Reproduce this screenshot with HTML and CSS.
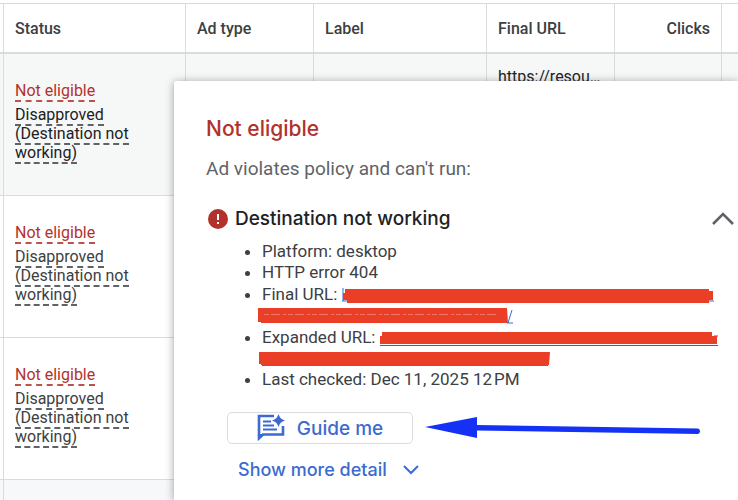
FILE: index.html
```html
<!DOCTYPE html>
<html lang="en">
<head>
    <meta charset="UTF-8">
    <meta name="viewport" content="width=device-width, initial-scale=1.0">
    <title>Ads</title>
    <link rel="stylesheet" href="styles.css">
</head>
<body>

    <!-- Ads table -->
    <table class="ads-table">
        <colgroup>
            <col class="col-edge">
            <col class="col-status">
            <col class="col-type">
            <col class="col-label">
            <col class="col-url">
            <col class="col-clicks">
            <col>
        </colgroup>
        <thead>
            <tr>
                <th></th>
                <th>Status</th>
                <th>Ad type</th>
                <th>Label</th>
                <th>Final URL</th>
                <th class="number">Clicks</th>
                <th></th>
            </tr>
        </thead>
        <tbody>
            <tr class="active">
                <td></td>
                <td>
                    <div class="status"><span class="status-error">Not eligible</span></div>
                    <div class="reason"><span>Disapproved (Destination not working)</span></div>
                </td>
                <td></td>
                <td></td>
                <td class="url">https://resou…</td>
                <td></td>
                <td></td>
            </tr>
            <tr>
                <td></td>
                <td>
                    <div class="status"><span class="status-error">Not eligible</span></div>
                    <div class="reason"><span>Disapproved (Destination not working)</span></div>
                </td>
                <td></td>
                <td></td>
                <td></td>
                <td></td>
                <td></td>
            </tr>
            <tr>
                <td></td>
                <td>
                    <div class="status"><span class="status-error">Not eligible</span></div>
                    <div class="reason"><span>Disapproved (Destination not working)</span></div>
                </td>
                <td></td>
                <td></td>
                <td></td>
                <td></td>
                <td></td>
            </tr>
        </tbody>
        <tfoot>
            <tr>
                <td></td>
                <td></td>
                <td></td>
                <td></td>
                <td></td>
                <td></td>
                <td></td>
            </tr>
        </tfoot>
    </table>

    <!-- Policy details popup -->
    <section class="popup">
        <h2>Not eligible</h2>
        <p>Ad violates policy and can't run:</p>

        <div class="issue-header">
            <svg class="error-icon" width="20" height="20" viewBox="0 0 20 20" aria-hidden="true">
                <circle cx="10" cy="10" r="10" fill="#b3312b"/>
                <path d="M10 5v6M10 13v2" stroke="#fff" stroke-width="2"/>
            </svg>
            <h3>Destination not working</h3>
            <button class="collapse-button" aria-label="Collapse">
                <svg width="22" height="14" viewBox="0 0 22 14" aria-hidden="true">
                    <path d="M1 13L11 3L21 13" fill="none" stroke="#5f6368" stroke-width="2.6"/>
                </svg>
            </button>
        </div>

        <ul class="issue-list">
            <li>Platform: desktop</li>
            <li>HTTP error 404</li>
            <li class="hidden-url">Final URL:
                <a href="#" aria-label="Final URL">
                    <svg width="372" height="17" viewBox="0 0 372 17" aria-hidden="true">
                        <path d="M1 1v13M0 14h5M366 14h6" fill="none" stroke="#3b6bd0"/>
                        <path d="M3 2H367V4H371V13H367V16H5V13H1V6H3Z" fill="#ea3f26"/>
                    </svg>
                    <svg class="second-line" width="256" height="17" viewBox="0 0 256 17" aria-hidden="true">
                        <path d="M250 16L254 3M249 16h6" fill="none" stroke="#3b6bd0"/>
                        <path d="M0 1H249L250 16H3V15H0Z" fill="#ea3f26"/>
                        <path d="M6 7.500h232" stroke="#ee7868" stroke-dasharray="5 2 9 3 3 2"/>
                    </svg>
                </a>
            </li>
            <li class="hidden-url">Expanded URL:
                <a href="#" aria-label="Expanded URL">
                    <svg width="338" height="17" viewBox="0 0 338 17" aria-hidden="true">
                        <path d="M0 15.500H338M334 6h4" fill="none" stroke="#5d50b5"/>
                        <path d="M2 2H332V6H337V14H0V6H2Z" fill="#ea3f26"/>
                    </svg>
                    <svg class="second-line" width="292" height="17" viewBox="0 0 292 17" aria-hidden="true">
                        <path d="M4 15.500H290" stroke="#8455a0"/>
                        <path d="M1 2H292L291 15H3V14H1Z" fill="#ea3f26"/>
                    </svg>
                </a>
            </li>
            <li>Last checked: Dec 11, 2025 12&#8239;PM</li>
        </ul>

        <div class="guide-row">
            <button class="guide-button">
                <svg width="28" height="28" viewBox="0 0 28 28" aria-hidden="true">
                    <path d="M17 2H2V24L6 20.500H26V12" fill="none" stroke="#3b6bd0" stroke-width="2.600"/>
                    <path d="M1 20V27L8 20Z" fill="#3b6bd0"/>
                    <path d="M6 7.500H14M6 11.500H17M6 15.500H20" stroke="#3b6bd0" stroke-width="2.200"/>
                    <path d="M21.500 0Q22.800 5.200 28 6.500Q22.800 7.800 21.500 13Q20.200 7.800 15 6.500Q20.200 5.200 21.500 0Z" fill="#3b6bd0"/>
                </svg>
                Guide me
            </button>
            <svg class="arrow" width="278" height="24" viewBox="0 0 278 24" aria-hidden="true">
                <path d="M0 11L52 1V22Z" fill="#1431f5"/>
                <path d="M51 9L273 12.500A2.900 2.900 0 0 1 273 18L51 14.500Z" fill="#1431f5"/>
            </svg>
        </div>

        <button class="more-button">
            Show more detail
            <svg width="16" height="10" viewBox="0 0 16 10" aria-hidden="true">
                <path d="M1 1L8 8L15 1" fill="none" stroke="#3b6bd0" stroke-width="2"/>
            </svg>
        </button>
    </section>

</body>
</html>
```
FILE: styles.css
```css
/* Page */
* {
    box-sizing: border-box;
}

body {
    margin: 0;
    padding-top: 3px;
    height: 100vh;
    overflow: hidden;
    font-family: Roboto, Arial, sans-serif;
    font-size: 16px;
    color: #3c4043;
    background-color: #ffffff;
}

button {
    border: none;
    background: none;
    padding: 0;
    cursor: pointer;
}

svg {
    flex-shrink: 0;
}

/* Ads table */
.ads-table {
    width: 100%;
    table-layout: fixed;
    border-collapse: separate;
    border-spacing: 0;
    border-top: 1px solid #dadcdc;
}

.col-edge {
    width: 4px;
}

.col-status {
    width: 182px;
}

.col-type,
.col-url {
    width: 128px;
}

.col-label {
    width: 173px;
}

.col-clicks {
    width: 107px;
}

th,
td {
    padding: 0 11px;
    text-align: left;
    border-right: 1px solid #dadcdc;
    border-bottom: 1px solid #dadcdc;
}

th:first-child,
td:first-child {
    padding: 0;
}

th:last-child,
td:last-child {
    border-right: none;
}

th {
    height: 50px;
    font-weight: 500;
    border-bottom-width: 2px;
}

td {
    height: 142px;
    padding-top: 27px;
    vertical-align: top;
    line-height: 19px;
}

.number {
    text-align: right;
}

.active td {
    color: #202124;
    background-color: #f6f8f8;
}

td.url {
    padding-top: 13px;
}

tfoot td {
    height: 40px;
    background-color: #f6f8fa;
}

.status {
    margin-bottom: 5px;
}

.active .status-error,
.status-error {
    color: #b3312b;
}

.status span,
.reason span {
    border-bottom: 2px dashed #5f6368;
}

.status .status-error {
    border-bottom-color: #c0504b;
}

/* Popup */
.popup {
    position: absolute;
    top: 81px;
    left: 174px;
    right: 0;
    bottom: 0;
    padding: 34px 4px 0 32px;
    background-color: #ffffff;
    border-top-left-radius: 3px;
    box-shadow: 0 1px 8px rgba(60, 64, 67, 0.5);
    overflow: hidden;
}

h2,
h3,
.guide-button,
.more-button {
    font-family: "Google Sans", Inter, sans-serif;
    font-weight: 500;
}

h2 {
    margin: 0;
    font-size: 21px;
    line-height: 28px;
    color: #b3312b;
}

.popup p {
    margin: 12px 0 24px;
    font-size: 19px;
    line-height: 28px;
    color: #5f6368;
}

.issue-header {
    display: flex;
    align-items: center;
    gap: 7px;
    padding-left: 2px;
    height: 24px;
}

h3 {
    margin: 0;
    font-size: 19px;
    line-height: 22px;
    color: #202124;
}

.collapse-button {
    margin-left: auto;
}

.issue-list {
    margin: 10px 0 22px;
    padding-left: 56px;
    font-size: 17px;
    line-height: 21px;
    white-space: nowrap;
}

.hidden-url {
    padding-top: 1px;
}

.hidden-url svg {
    vertical-align: middle;
}

.hidden-url .second-line {
    display: block;
    margin: 2px 0 2px -4px;
}

.guide-row {
    display: flex;
    align-items: center;
    gap: 12px;
    padding-left: 21px;
}

.guide-button {
    display: flex;
    align-items: center;
    justify-content: center;
    gap: 12px;
    width: 186px;
    height: 32px;
    font-size: 19px;
    color: #3b6bd0;
    border: 1px solid #dadce0;
    border-radius: 5px;
}

.more-button {
    display: flex;
    align-items: center;
    gap: 16px;
    margin: 14px 0 0 32px;
    font-size: 18px;
    line-height: 24px;
    color: #3b6bd0;
}
```
